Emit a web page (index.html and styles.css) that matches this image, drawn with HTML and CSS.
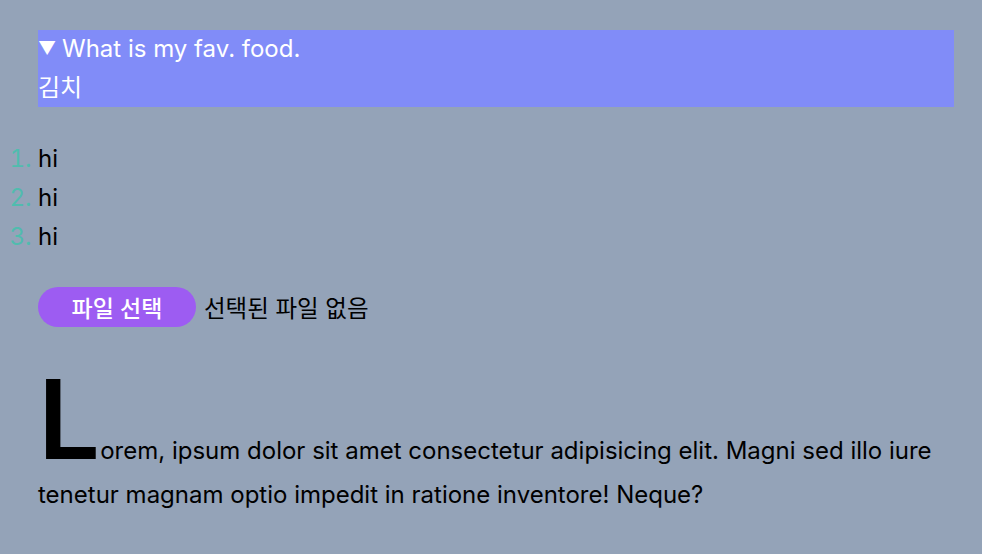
FILE: index.html
```html
<!DOCTYPE html>
<html lang="ko">
<head>
<meta charset="utf-8">
<title>Demo</title>
<link rel="stylesheet" href="styles.css">
</head>
<body>
<main class="page">
  <details class="faq" open>
    <summary class="faq-summary"><span class="faq-marker">▼</span>What is my fav. food.</summary>
    <div class="faq-answer">김치</div>
  </details>

  <ol class="list">
    <li>hi</li>
    <li>hi</li>
    <li>hi</li>
  </ol>

  <div class="file">
    <span class="file-btn">파일 선택</span>
    <span class="file-name">선택된 파일 없음</span>
  </div>

  <p class="text"><span class="dropcap">L</span>orem, ipsum dolor sit amet consectetur adipisicing elit. Magni sed illo iure tenetur magnam optio impedit in ratione inventore! Neque?</p>
</main>
</body>
</html>
```

FILE: styles.css
```css
html, body {
  margin: 0;
  padding: 0;
  background: #94a3b8;
}
body {
  font-family: Inter, "Noto Sans CJK KR", sans-serif;
  font-size: 24px;
  color: #000;
}
.page {
  padding: 30px 28px 20px 38px;
}
.faq {
  background: #818cf8;
  color: #fff;
  line-height: 38.5px;
  margin: 0;
}
.faq-summary {
  list-style: none;
  display: flex;
  align-items: center;
  cursor: pointer;
}
.faq-summary::-webkit-details-marker { display: none; }
.faq-marker {
  font-size: 18px;
  width: 24px;
}
.list {
  margin: 32px 0 0 0;
  padding: 0;
  line-height: 39px;
}
.list li::marker {
  color: #50bcae;
}
.file {
  margin-top: 31px;
  display: flex;
  align-items: center;
  gap: 8px;
}
.file-btn {
  background: #9d5cf2;
  color: #fff;
  border-radius: 20px;
  height: 40px;
  width: 158px;
  font-size: 23px;
  display: flex;
  align-items: center;
  justify-content: center;
  font-weight: 500;
}
.file-name {
  font-size: 23.5px;
}
.text {
  margin: 37px 0 0 0;
  line-height: 42px;
}
.dropcap {
  font-size: 110px;
  font-weight: 600;
  line-height: 1;
}
```
